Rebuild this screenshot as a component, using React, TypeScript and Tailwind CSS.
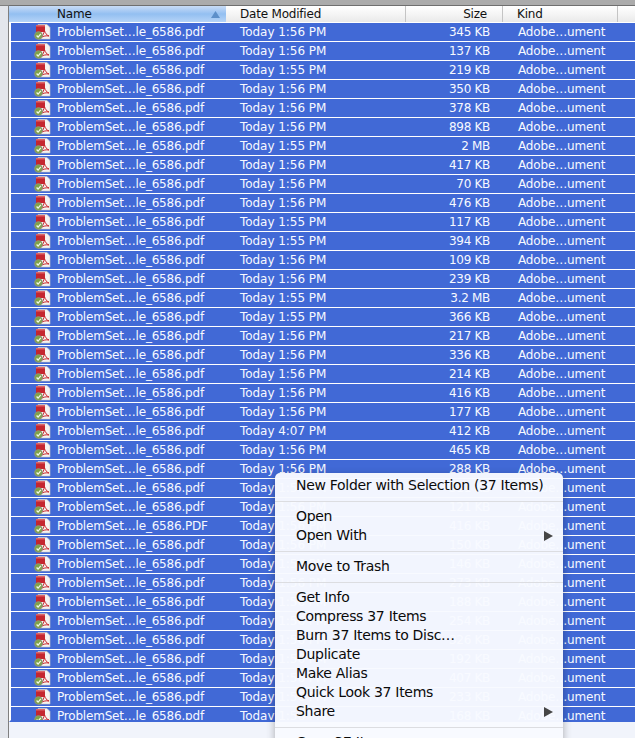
const rows: [string, string][] = [
  ["1:56", "345 KB"], ["1:56", "137 KB"], ["1:55", "219 KB"], ["1:56", "350 KB"], ["1:56", "378 KB"],
  ["1:56", "898 KB"], ["1:55", "2 MB"], ["1:56", "417 KB"], ["1:56", "70 KB"], ["1:56", "476 KB"],
  ["1:55", "117 KB"], ["1:55", "394 KB"], ["1:56", "109 KB"], ["1:56", "239 KB"], ["1:55", "3.2 MB"],
  ["1:55", "366 KB"], ["1:56", "217 KB"], ["1:56", "336 KB"], ["1:56", "214 KB"], ["1:56", "416 KB"],
  ["1:56", "177 KB"], ["4:07", "412 KB"], ["1:56", "465 KB"], ["1:56", "288 KB"], ["1:56", "311 KB"],
  ["1:56", "121 KB"], ["1:56", "416 KB"], ["1:56", "150 KB"], ["1:56", "146 KB"], ["1:56", "273 KB"],
  ["1:56", "188 KB"], ["1:56", "254 KB"], ["1:56", "326 KB"], ["1:56", "192 KB"], ["1:56", "407 KB"],
  ["1:56", "233 KB"], ["1:56", "168 KB"],
];

function PdfIcon() {
  return (
    <svg width="17" height="16" viewBox="0 0 17 16" className="shrink-0">
      <path d="M4 0.5h9l3 3v11.500H4z" fill="#f6f3f0" stroke="#cfc9c4" strokeWidth="0.6" />
      <rect x="2" y="1" width="9" height="7" fill="#c4262f" />
      <rect x="2" y="1" width="9" height="1.500" fill="#dc666a" />
      <path d="M15 12c-2.500-1-4-3-4.500-5.500C10 9 9 11.500 7 13.500c2.500-1.500 5-2 8-1.500" fill="none" stroke="#c9242c" strokeWidth="1" />
      <circle cx="4.500" cy="11.500" r="4.300" fill="#8a9577" />
      <circle cx="4.500" cy="11.500" r="3.200" fill="#7fa447" />
      <path d="M2.600 11.500l1.500 1.600 2.700-3.200" fill="none" stroke="#f4f7ea" strokeWidth="1.300" />
    </svg>
  );
}

function Arrow() {
  return (
    <svg width="9" height="10" viewBox="0 0 9 10" className="shrink-0">
      <path d="M0 0l9 5-9 5z" fill="#464646" />
    </svg>
  );
}

function Sep({ h }: { h: string }) {
  return (
    <div className={`${h} flex items-center`}>
      <div className="h-[1px] w-full bg-[#dcdde1]" />
    </div>
  );
}

function Item({ label, sub }: { label: string; sub?: boolean }) {
  return (
    <div className="flex h-[19px] shrink-0 items-center justify-between whitespace-nowrap pl-[21px] pr-[10px] text-[14px] leading-[19px] tracking-[-0.3px] text-[#0a0a0a]">
      <span>{label}</span>
      {sub && <Arrow />}
    </div>
  );
}

function HeaderCell({ w, children, right }: { w: string; children: React.ReactNode; right?: boolean }) {
  return (
    <div className={`${w} flex h-full items-center border-r border-[#c4c4c4] ${right ? "justify-end pr-[15px]" : "pl-[14px]"}`}>
      {children}
    </div>
  );
}

export default function App() {
  return (
    <div
      className="relative h-[738px] w-[635px] overflow-hidden bg-[#f1f4fb] text-[12px]"
      style={{ fontFamily: '"DejaVu Sans", sans-serif' }}
    >
      <div className="h-[5px] bg-[#ababab]" />
      <div className="flex h-[733px]">
        <div className="w-[9px] shrink-0 border-t border-r border-[#7f7f7f] bg-[#e3e6ec]" />
        <div className="flex min-w-0 flex-1 flex-col border-t border-[#6f6f6f]">
          <div className="flex h-[16px] shrink-0 text-[#111111] tracking-[-0.2px]">
            <div className="flex h-full w-[217px] shrink-0 items-center justify-between bg-gradient-to-b from-[#c9dcf6] via-[#93bff1] to-[#b5d3f7] pl-[48px] pr-[6px]">
              <span>Name</span>
              <svg width="9" height="7" viewBox="0 0 9 7"><path d="M4.500 0L9 7H0z" fill="#5c8fc9" /></svg>
            </div>
            <div className="flex h-full flex-1 bg-gradient-to-b from-[#ffffff] via-[#f5f5f5] to-[#e9e9e9]">
              <HeaderCell w="w-[180px] shrink-0">Date Modified</HeaderCell>
              <HeaderCell w="w-[97px] shrink-0" right>Size</HeaderCell>
              <HeaderCell w="w-[115px] shrink-0">Kind</HeaderCell>
            </div>
          </div>
          <div className="h-[700px] shrink-0 overflow-hidden border-b-[2px] border-l-[2px] border-[#4169d6] bg-white pt-[1px] [border-left-color:#ffffff]">
            {rows.map(([time, size], i) => (
              <div key={i} className="mb-[1px] flex h-[18px] items-center whitespace-nowrap bg-[#4169d6] text-[#f7f9ff]">
                <div className="w-[23px] shrink-0" />
                <PdfIcon />
                <div className="w-[189px] shrink-0 pl-[6px] tracking-[-0.2px]">ProblemSet…le_6586.{i === 26 ? "PDF" : "pdf"}</div>
                <div className="w-[196px] shrink-0 tracking-[-0.05px]">Today {time} PM</div>
                <div className="w-[54px] shrink-0 text-right tracking-[-0.3px]">{size}</div>
                <div className="pl-[28px] tracking-[-0.15px]">Adobe…ument</div>
              </div>
            ))}
          </div>
        </div>
      </div>

      <div className="absolute top-[473px] left-[275px] flex h-[300px] w-[288px] flex-col rounded-[5px] bg-[#f8faff]/97 pt-[3px] shadow-[0_3px_8px_rgba(0,0,0,0.3)]">
        <Item label="New Folder with Selection (37 Items)" />
        <Sep h="h-[12px]" />
        <Item label="Open" />
        <Item label="Open With" sub />
        <Sep h="h-[12px]" />
        <Item label="Move to Trash" />
        <Sep h="h-[12px]" />
        <Item label="Get Info" />
        <Item label="Compress 37 Items" />
        <Item label="Burn 37 Items to Disc…" />
        <Item label="Duplicate" />
        <Item label="Make Alias" />
        <Item label="Quick Look 37 Items" />
        <Item label="Share" sub />
        <Sep h="h-[12px]" />
        <Item label="Copy 37 Items" />
      </div>
    </div>
  );
}
